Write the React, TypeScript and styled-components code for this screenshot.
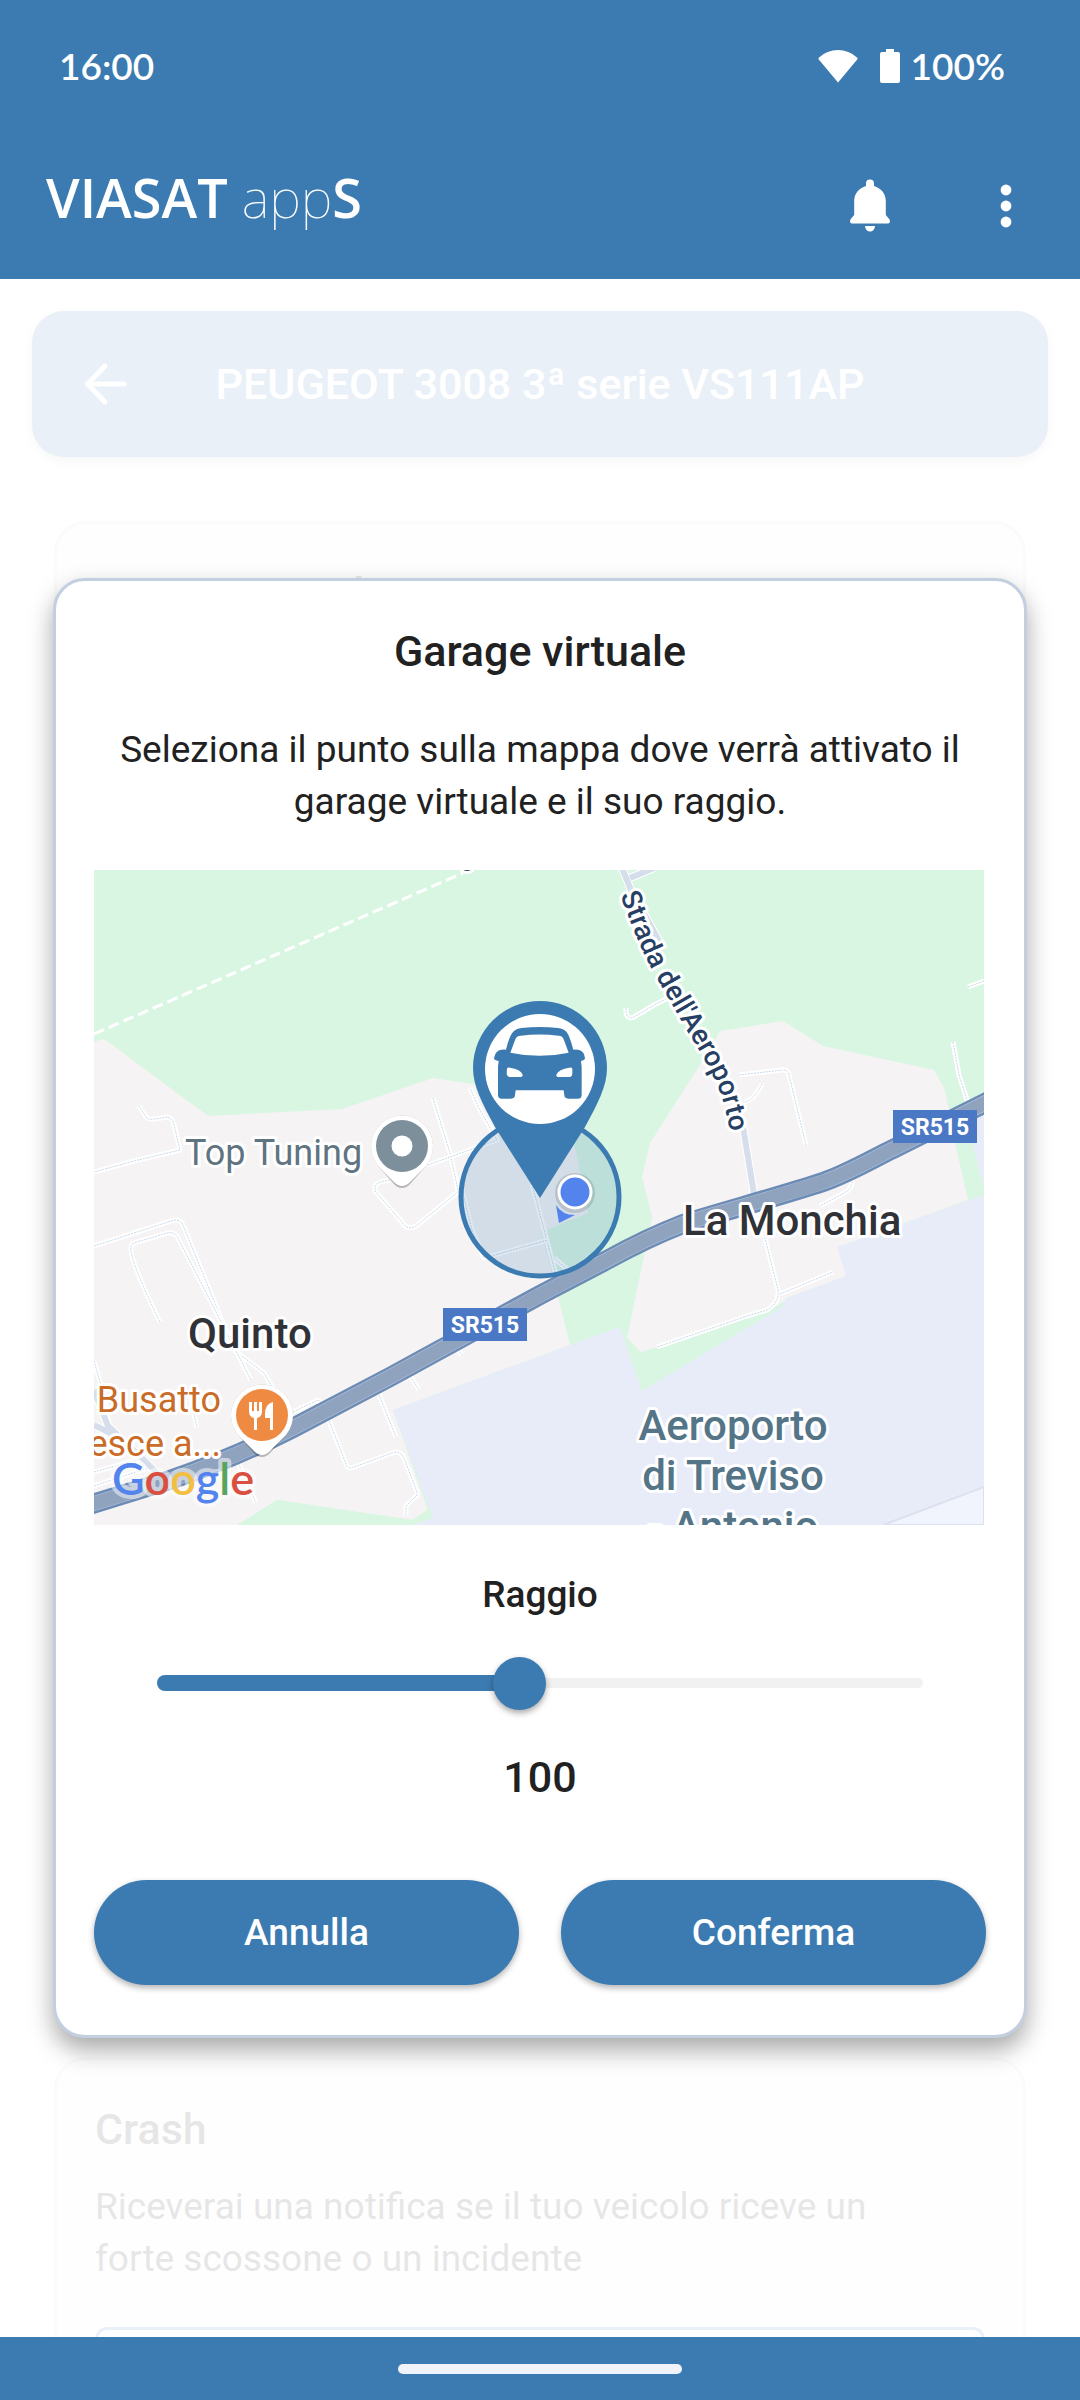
import React, { useState } from "react";
import styled, { createGlobalStyle } from "styled-components";

const BLUE = "#3c7bb1";
const INK = "#212121";

const GlobalStyle = createGlobalStyle`
  * { box-sizing: border-box; }
  body { margin: 0; background: #fff; font-family: Roboto, "Liberation Sans", sans-serif; color: ${INK}; }
  h1, h2, p { margin: 0; }
  button { font: inherit; border: 0; cursor: pointer; }
`;

const Screen = styled.div`
  display: flex;
  flex-direction: column;
  height: 100vh;
  overflow: hidden;
`;

const TopBar = styled.header`
  background: ${BLUE};
  color: #fff;
`;

const StatusBar = styled.div`
  display: flex;
  align-items: center;
  justify-content: space-between;
  height: 132px;
  padding: 0 75px 0 59px;
  font: 600 37px/44px Lato, Roboto, sans-serif;
`;

const StatusIcons = styled.div`
  display: flex;
  align-items: center;
  gap: 11px;

  svg:first-child { margin-right: 11px; }
`;

const AppBar = styled.div`
  display: flex;
  align-items: center;
  justify-content: space-between;
  height: 147px;
  padding: 0 48px 0 46px;
`;

const Logo = styled.div`
  padding-bottom: 18px;
  font: 600 54px/64px "Open Sans", "Noto Sans", sans-serif;
  white-space: nowrap;
`;

const LogoLight = styled.span`
  font-family: "Noto Sans", "Open Sans", sans-serif;
  font-weight: 100;
`;

const Actions = styled.div`
  display: flex;
  align-items: center;
  gap: 90px;
`;

const IconButton = styled.button`
  display: flex;
  align-items: center;
  justify-content: center;
  padding: 0;
  background: none;
  color: #fff;
`;

const Main = styled.main`
  position: relative;
  flex: 1;
  min-height: 0;
  overflow: hidden;
`;

const Page = styled.div`
  padding: 32px;
`;

const VehicleBar = styled.div`
  display: grid;
  grid-template-columns: 1fr auto 1fr;
  align-items: center;
  height: 146px;
  padding: 0 52px;
  border-radius: 32px;
  background: ${BLUE};
  color: #fff;
  box-shadow: 0 4px 12px rgba(0, 0, 0, 0.3);
`;

const Cards = styled.div`
  display: flex;
  flex-direction: column;
  gap: 32px;
  margin: 64px 22px 0;
`;

const Card = styled.section<{ $tall?: boolean }>`
  min-height: ${(p) => (p.$tall ? "1504px" : "420px")};
  padding: 43px 38px;
  border: 3px solid #d4d8dc;
  border-radius: 32px;
  background: #f0f0f0;
`;

const Title = styled.h2`
  font-size: 43px;
  font-weight: 500;
  line-height: 52px;
`;

const Text = styled.p`
  font-size: 37px;
  line-height: 52px;
`;

const CardText = styled(Text)`
  margin: 26px 0 42px;
  padding-right: 64px;
`;

const Field = styled.div`
  height: 120px;
  border: 3px solid ${BLUE};
  border-radius: 12px;
  background: #f8fafc;
`;

const Scrim = styled.div`
  position: absolute;
  inset: 0;
  display: flex;
  align-items: center;
  padding: 0 53px;
  background: rgba(255, 255, 255, 0.89);
`;

const Dialog = styled.section`
  flex: 1;
  display: flex;
  flex-direction: column;
  padding: 44px 38px 50px;
  border: 3px solid #c3cfe0;
  border-radius: 32px;
  background: #fff;
  text-align: center;
  box-shadow: 0 12px 24px rgba(0, 0, 0, 0.34);
`;

const DialogText = styled(Text)`
  margin: 47px 0 42px;
`;

const MapFrame = styled.div`
  padding-right: 2px;
`;

const MapView = styled.svg`
  display: block;
  width: 100%;
  aspect-ratio: 890 / 655;
  font-family: Roboto, sans-serif;
`;

const RangeLabel = styled.label`
  margin: 44px 0 36px;
  font-size: 37px;
  font-weight: 500;
  line-height: 52px;
`;

const Slider = styled.div`
  display: grid;
  margin: 0 36px;
`;

const Track = styled.div`
  grid-area: 1 / 1;
  display: flex;
  align-items: center;
  margin: 0 27px;
`;

const TrackDone = styled.span`
  height: 16px;
  border-radius: 8px 0 0 8px;
  background: ${BLUE};
`;

const TrackRest = styled.span`
  flex: 1;
  height: 10px;
  border-radius: 0 5px 5px 0;
  background: #f1f1f1;
`;

const Range = styled.input`
  grid-area: 1 / 1;
  width: 100%;
  height: 52px;
  margin: 0;
  appearance: none;
  background: transparent;

  &::-webkit-slider-thumb {
    appearance: none;
    width: 53px;
    height: 53px;
    border-radius: 50%;
    background: ${BLUE};
    box-shadow: 0 3px 6px rgba(0, 0, 0, 0.35);
  }
`;

const Value = styled.output`
  margin: 42px 0 77px;
  font-size: 43px;
  font-weight: 500;
  line-height: 52px;
`;

const Buttons = styled.div`
  display: grid;
  grid-template-columns: 1fr 1fr;
  gap: 42px;
`;

const PillButton = styled.button`
  height: 105px;
  border-radius: 53px;
  background: ${BLUE};
  color: #fff;
  font-size: 37px;
  font-weight: 500;
  box-shadow: 0 3px 6px rgba(0, 0, 0, 0.3);
`;

const NavBar = styled.footer`
  display: flex;
  align-items: center;
  justify-content: center;
  height: 63px;
  background: ${BLUE};
`;

const NavHandle = styled.span`
  width: 284px;
  height: 10px;
  border-radius: 5px;
  background: #f0f4fa;
`;

const WifiIcon = () => (
  <svg width="40" height="34" viewBox="0 0 40 34" fill="currentColor">
    <path d="M20 33.500L.8 10.500Q0 9.500 1 8.500Q9 1 20 1Q31 1 39 8.500Q40 9.500 39.200 10.500Z" />
  </svg>
);

const BatteryIcon = () => (
  <svg width="20" height="36" viewBox="0 0 20 36" fill="currentColor">
    <path d="M6 1h8v3h4q2 0 2 2v27q0 2-2 2H2q-2 0-2-2V6q0-2 2-2h4z" />
  </svg>
);

const BellIcon = () => (
  <svg width="40" height="54" viewBox="0 0 40 54" fill="currentColor">
    <path d="M16 7V4.500a4 4 0 0 1 8 0V7c7 2 11.800 7.500 11.800 15v14l3 3.500c2.200 2.500 1 5-1.300 5h-35c-2.300 0-3.500-2.500-1.300-5l3-3.500V22C4.200 14.500 9 9 16 7z" />
    <path d="M15 47h10a5 5.500 0 0 1-10 0z" />
  </svg>
);

const DotsIcon = () => (
  <svg width="52" height="52" viewBox="0 0 52 52" fill="currentColor">
    <circle cx="26" cy="10" r="5.400" />
    <circle cx="26" cy="26" r="5.400" />
    <circle cx="26" cy="42" r="5.400" />
  </svg>
);

const BackIcon = () => (
  <svg width="44" height="44" viewBox="0 0 44 44" fill="none" stroke="currentColor" strokeWidth="5" strokeLinecap="round" strokeLinejoin="round">
    <path d="M40 22H4M21 4L3.500 22L21 40" />
  </svg>
);

const MAIN_ROAD =
  "M-8 636L76 610Q140 588 199 558L296 507L446 425L513 390Q553 368 589 354C620 344 690 325 729 312C755 303 780 288 799 279L895 231";

const SIDE_STREETS =
  "M528 -2L537 20L570 80M536 8L560 -2M649 257L661 330M0 520L14 556L50 590L70 610M0 555L20 565";

const LANES = [
  "M45 236L52 247Q55 250 60 249L74 247Q79 249 80 255L86 280L40 291L0 302",
  "M339 228L356 283L364 320",
  "M334 295L403 270L385 238L376 218",
  "M296 310Q281 312 281 317V321L308 352Q313 361 322 356L364 322",
  "M0 376L77 351Q86 348 89 355L140 480L170 503L180 520",
  "M66 452Q38 395 37 380Q36 373 43 372L70 364Q80 360 84 368L157 510",
  "M0 491L9 522L15 555",
  "M96 525L103 558",
  "M0 602L50 588",
  "M0 616L60 596",
  "M142 588L162 633",
  "M234 548L252 594Q254 600 260 597L298 583Q306 580 310 588L323 622Q324 626 320 628L312 636V646",
  "M284 522L302 567",
  "M315 504L325 520",
  "M364 479L368 485",
  "M199 542L224 530L231 536",
  "M532 138V143Q534 150 540 147L562 134L576 127",
  "M874 117L890 111",
  "M859 172L865 205L874 233",
  "M645 205L688 200Q693 199 695 205L712 275",
  "M668 214Q660 230 651 232",
  "M755 306L758 312Q758 319 750 323L726 336",
  "M663 332L671 368L684 420Q686 432 673 440L653 446L563 477",
  "M686 424L739 402",
  "M438 314L462 405",
  "M368 320L378 360L390 388L454 370",
  "M460 388L474 400",
];

const CarPin = () => (
  <g>
    <path d="M446 328L401 257C388 233 379 216 379 198A67 67 0 0 1 513 198C513 216 504 233 491 257Z" fill={BLUE} />
    <circle cx="446" cy="199" r="55" fill="#fff" />
    <g transform="translate(346 110) scale(.3333)">
      <path
        fill={BLUE}
        d="M198 209Q208 168 219 156Q228 146 245 144Q299 138 354 144Q371 146 380 156Q389 168 400 209Q424 207 432 222L435 235Q434 242 423 243L425 260V344Q425 356 414 356H385Q374 356 373 346L371 331H227L225 346Q224 356 213 356H185Q174 356 174 344V260L176 243Q163 242 162 235L166 222Q174 207 198 209Z"
      />
      <path fill="#fff" d="M211 218L226 178Q229 168 242 167Q299 160 356 167Q368 168 371 178L386 218Q299 237 211 218Z" />
      <path fill="#fff" d="M201 266Q202 262 210 263Q242 268 248 284Q249 290 242 291H208Q201 290 200 280ZM397 266Q396 262 388 263Q356 268 349 284Q348 290 355 291H390Q397 290 397 280Z" />
    </g>
  </g>
);

const PlacePin = ({ x, y, color, children }: { x: number; y: number; color: string; children: React.ReactNode }) => (
  <g transform={`translate(${x} ${y})`}>
    <path d="M0 42Q-5 42 -9 37L-24 20A31 31 0 1 1 24 20L9 37Q5 42 0 42Z" fill="#000" opacity=".25" />
    <path d="M0 40Q-4 40 -8 36L-24 20A31 31 0 1 1 24 20L8 36Q4 40 0 40Z" fill="#fff" />
    <circle r="26" fill={color} />
    {children}
  </g>
);

const RoadSign = ({ x, y }: { x: number; y: number }) => (
  <g>
    <rect x={x} y={y} width="84" height="33" fill="#4b78c4" />
    <text x={x + 42} y={y + 25} fontSize="23" fontWeight="700" fill="#fff" textAnchor="middle">SR515</text>
  </g>
);

const GarageMap = () => (
  <MapView viewBox="0 0 890 655" preserveAspectRatio="xMidYMid slice" role="img" aria-label="Mappa">
    <rect width="890" height="655" fill="#d9f6e3" />
    <path d="M0 172L8 169L13 171L114 246L248 239L339 208L379 214L440 230L481 277L494 343L447 362L463 423L476 475L299 540L339 655H318V650L183 630L143 655H0Z" fill="#f5f3f4" />
    <path d="M609 190L626 161L689 151L729 176L840 200L851 220L861 273L874 330L813 352L752 406L692 430L673 442L547 482L533 468L558 347L548 307L556 273Z" fill="#f5f3f4" />
    <path d="M299 540L476 475L526 457L548 521L688 437L692 428L752 406L743 377L813 352L890 325V655H318L339 648Z" fill="#e8ecf9" />
    <path d="M872 250L890 240V318Z" fill="#e8ecf9" />
    <path d="M789 655L890 617V655Z" fill="#f1f4fd" stroke="#dce1ef" strokeWidth="2" />
    <path d="M143 655L183 630L318 650L336 638L339 648L318 655Z" fill="#d9f6e3" />

    <path d="M0 164L369 3" stroke="#fff" strokeWidth="3" strokeDasharray="11 5" />

    <g fill="none" strokeLinejoin="round">
      {LANES.map((d) => (
        <g key={d}>
          <path d={d} stroke="#fff" strokeWidth="5" />
          <path d={d} stroke="#c9d8e9" strokeWidth="1" strokeDasharray="2 1" />
        </g>
      ))}
      <path d={SIDE_STREETS} stroke="#fff" strokeWidth="8" />
      <path d={SIDE_STREETS} stroke="#d5deea" strokeWidth="6" />
      <path d={MAIN_ROAD} stroke="#6d8cb5" strokeWidth="20" />
      <path d={MAIN_ROAD} stroke="#b7c8de" strokeWidth="15" />
      <path d={MAIN_ROAD} stroke="#90a3be" strokeWidth="14" />
    </g>

    <circle cx="446" cy="327" r="79" fill={BLUE} fillOpacity=".18" stroke={BLUE} strokeWidth="5" />
    <CarPin />

    <circle cx="481" cy="323" r="20" fill="#000" opacity=".12" />
    <circle cx="481" cy="322" r="16" fill="#5384ee" stroke="#fff" strokeWidth="3" />
    <path d="M462 335Q468 345 481 345L465 353Z" fill="#5384ee" />

    <g stroke="#fff" strokeWidth="6" strokeLinejoin="round" paintOrder="stroke">
      <ellipse cx="373" cy="-2" rx="5" ry="3" fill="#263f63" />
      <path id="street" d="M526 25L540 61Q546 76 557 98L592 159Q618 200 626 222Q634 245 641 290" fill="none" stroke="none" />
      <text fontSize="28" fontWeight="500" fill="#263f63">
        <textPath href="#street">Strada dell'Aeroporto</textPath>
      </text>
      <text x="91" y="295" fontSize="36" fill="#5f7480">Top Tuning</text>
      <text x="94" y="478" fontSize="42" fontWeight="500" fill="#303238">Quinto</text>
      <text x="589" y="365" fontSize="42" fontWeight="500" fill="#303238">La Monchia</text>
      <g fontSize="36" fill="#c96c28" textAnchor="end">
        <text x="127" y="542">Busatto</text>
        <text x="127" y="586">esce a...</text>
      </g>
      <g fontSize="42" fontWeight="500" fill="#547487" textAnchor="middle">
        <text x="639" y="570">Aeroporto</text>
        <text x="639" y="620">di Treviso</text>
        <text x="639" y="671">- Antonio</text>
      </g>
    </g>

    <RoadSign x={349} y={438} />
    <RoadSign x={799} y={240} />

    <PlacePin x={308} y={276} color="#7c8f9b">
      <circle r="10.500" fill="#fff" />
    </PlacePin>
    <PlacePin x={168} y={545} color="#ee8a41">
      <path d="M-13 -13V-4Q-13 2 -8 3V15H-5V3Q0 2 0 -4V-13H-3V-4H-5V-13H-8V-4H-10V-13ZM11 -13Q3 -11 3 -1V3H8V15H11Z" fill="#fff" />
    </PlacePin>

    <text x="18" y="625" fontFamily="Lato, Roboto, sans-serif" fontSize="45" fontWeight="600" stroke="#fff" strokeOpacity=".5" strokeWidth="8" strokeLinejoin="round" paintOrder="stroke">
      <tspan fill="#5384ee">G</tspan>
      <tspan fill="#d94f40">o</tspan>
      <tspan fill="#f2bf42">o</tspan>
      <tspan fill="#5384ee">g</tspan>
      <tspan fill="#58a55c">l</tspan>
      <tspan fill="#d94f40">e</tspan>
    </text>
  </MapView>
);

const MIN = 10;
const MAX = 200;

export default function App() {
  const [radius, setRadius] = useState(100);
  const done = ((radius - MIN) / (MAX - MIN)) * 100;

  return (
    <Screen>
      <GlobalStyle />
      <TopBar>
        <StatusBar>
          <span>16:00</span>
          <StatusIcons>
            <WifiIcon />
            <BatteryIcon />
            <span>100%</span>
          </StatusIcons>
        </StatusBar>
        <AppBar>
          <Logo>
            VIASAT <LogoLight>app</LogoLight>S
          </Logo>
          <Actions>
            <IconButton aria-label="Notifiche"><BellIcon /></IconButton>
            <IconButton aria-label="Menu"><DotsIcon /></IconButton>
          </Actions>
        </AppBar>
      </TopBar>

      <Main>
        <Page>
          <VehicleBar>
            <div>
              <IconButton aria-label="Indietro"><BackIcon /></IconButton>
            </div>
            <Title as="h1">PEUGEOT 3008 3ª serie VS111AP</Title>
          </VehicleBar>
          <Cards>
            <Card $tall>
              <Title>Garage virtuale</Title>
            </Card>
            <Card>
              <Title>Crash</Title>
              <CardText>Riceverai una notifica se il tuo veicolo riceve un forte scossone o un incidente</CardText>
              <Field />
            </Card>
          </Cards>
        </Page>

        <Scrim>
          <Dialog role="dialog" aria-labelledby="dialog-title">
            <Title id="dialog-title">Garage virtuale</Title>
            <DialogText>Seleziona il punto sulla mappa dove verrà attivato il garage virtuale e il suo raggio.</DialogText>
            <MapFrame>
              <GarageMap />
            </MapFrame>
            <RangeLabel htmlFor="radius">Raggio</RangeLabel>
            <Slider>
              <Track>
                <TrackDone style={{ width: `${done}%` }} />
                <TrackRest />
              </Track>
              <Range id="radius" type="range" min={MIN} max={MAX} value={radius} onChange={(e) => setRadius(Number(e.target.value))} />
            </Slider>
            <Value htmlFor="radius">{radius}</Value>
            <Buttons>
              <PillButton type="button">Annulla</PillButton>
              <PillButton type="button">Conferma</PillButton>
            </Buttons>
          </Dialog>
        </Scrim>
      </Main>

      <NavBar>
        <NavHandle />
      </NavBar>
    </Screen>
  );
}
